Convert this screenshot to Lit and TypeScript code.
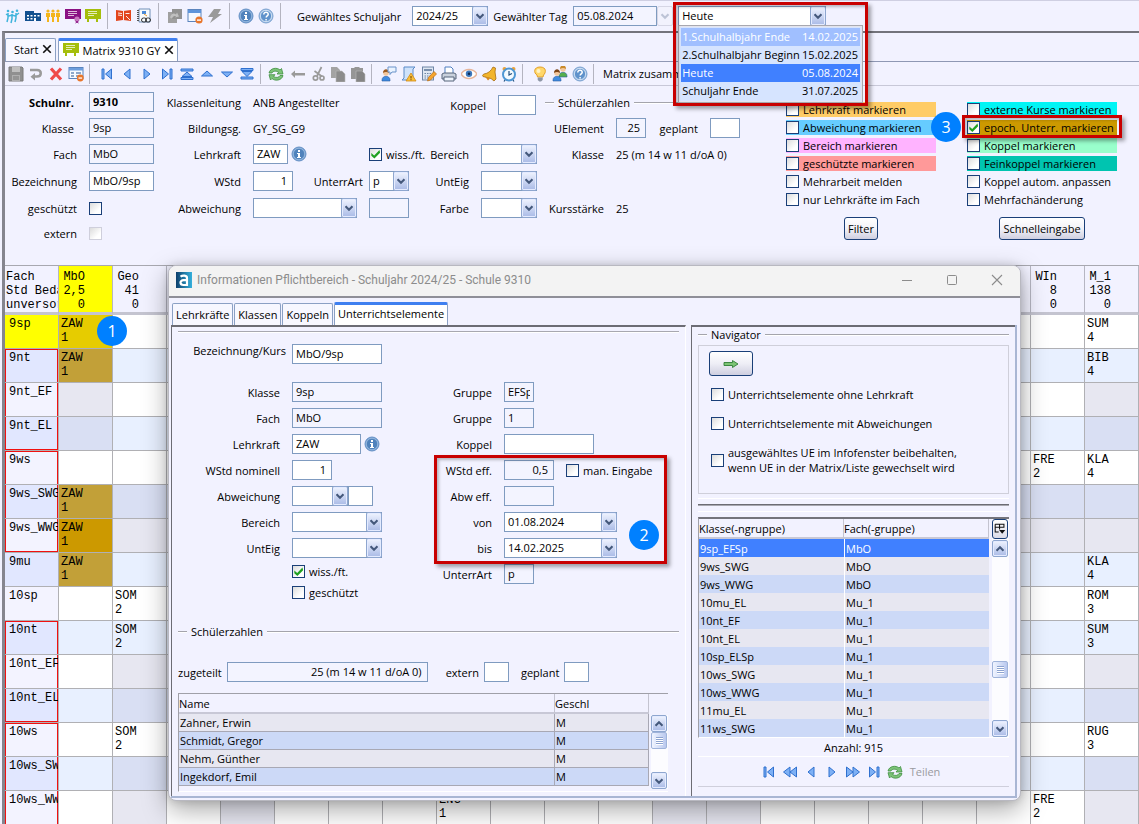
import { LitElement, html, svg, css, nothing, TemplateResult } from "lit";
import { customElement } from "lit/decorators.js";
import { classMap } from "lit/directives/class-map.js";

const G = "#9a9a9a";
const info = svg`<circle cx="8" cy="8" r="7" fill="#7fa8d6" stroke="#5a88bf" stroke-width=".9"/><circle cx="8" cy="8" r="5.700" fill="#4f82bc" stroke="#a4c2e4" stroke-width=".7"/><path d="M7 4h2v2H7zM6 7h3v4h1v1H6v-1h1V8H6z" fill="#fff"/>`;
const help = svg`<circle cx="8" cy="8" r="7" fill="#a9c5e6" stroke="#6f9acb" stroke-width=".9"/><circle cx="8" cy="8" r="5.600" fill="#5f92cb" stroke="#dce9f7" stroke-width=".8"/><path d="M5.8 6.400c0-3 4.600-2.800 4.400 0-.1 1.400-2 1.500-2 3M8.100 11v1.400" fill="none" stroke="#fff" stroke-width="1.500"/>`;
const person = (x: number, y: number, hair: string, body: string) => svg`<path d="M${x - 4} ${y + 8}c0-5 8-5 8 0v1h-8z" fill="${body}" stroke="#2a5ca0" stroke-width=".6"/><circle cx="${x}" cy="${y + 1}" r="2.800" fill="#f3c79c"/><path d="M${x - 3} ${y + 1}c0-5 6-5 6 0-2-1.500-4-1.500-6 0z" fill="${hair}"/>`;
const formWin = svg`<rect x="1" y="1.500" width="13" height="12" fill="#f5f9ff" stroke="#5b84bd"/><path d="M1 2h13v3H1z" fill="#5f95da"/><circle cx="12" cy="12" r="3.600" fill="#e8762c"/><path d="M10 11.400h4v1.400h-4z" fill="#fff"/>`;
const board = (c: string) => svg`<path d="M0 1h16v10H0z" fill="${c}"/><path d="M3 3.500h9M3 5.500h9M3 7.500h6" stroke="#fff" stroke-width=".9" opacity=".8"/>`;
const left = "M12 2v12L5 8z";
const right = "M5 2v12l7-6z";
const blue = (d: string) => svg`<path d="${d}" fill="#7db0f5" stroke="#2f70cf" stroke-width="1"/>`;

const ICONS: Record<string, unknown> = {
  pupils: svg`<g fill="none" stroke="#3fb4dc" stroke-width="1.500"><path d="M3 5v5l-1 4M7 6v5l-1 4M11 5v5l-1 4M1 6l3 2 3-1 3 1 4-3"/></g><g fill="#3fb4dc"><circle cx="3" cy="3" r="1.300"/><circle cx="7.500" cy="4" r="1.300"/><circle cx="12" cy="2.800" r="1.300"/></g>`,
  school: svg`<path d="M0 3h9v2h7v8H0z" fill="#12508f"/><path d="M2 7h2v1.500H2zM5.500 7h2v1.500h-2zM9 7h2v1.500H9zM12.500 7h2v1.500h-2zM2 10h2v1.500H2zM5.500 10h2v1.500h-2zM9 10h2v3H9z" fill="#fff"/>`,
  people: svg`<g fill="#f3b51b"><circle cx="3" cy="3" r="1.600"/><circle cx="8" cy="3" r="1.600"/><circle cx="13" cy="3" r="1.600"/><path d="M1 5h4v4H4v5H2V9H1zM6 5h4v4H9v5H7V9H6zM11 5h4v4h-1v5h-2V9h-1z"/></g>`,
  purple: svg`${board("#8a1083")}<circle cx="12" cy="11" r="2.600" fill="#c67abf"/><path d="M10.500 13l3 2M13.500 13l-3 2" stroke="#8a1083"/>`,
  green: svg`${board("#a5be0b")}<path d="M2 11h2v3H2zM11 11h2v3h-2z" fill="#a5be0b"/>`,
  book: svg`<path d="M0 2l7 1 8-1v11l-8-1-7 1z" fill="#e2451c"/><path d="M7.500 3v9M2 5l4 .5M2 7l4 .5M9.500 5.500h4M10 8l4 4" stroke="#fff" stroke-width=".9"/>`,
  note: svg`<path d="M3 1h11v13H3z" fill="#f8fafc" stroke="#7090b8"/><path d="M2 2v12" stroke="#555" stroke-width="2" stroke-dasharray="1 1"/><path d="M6 3h4v3H6z" fill="#4a8ad8"/><path d="M8 6l3 2" stroke="#e39a2d"/><rect x="5.500" y="10" width="5" height="4" rx="2" fill="none" stroke="#333"/><rect x="9.500" y="10" width="5" height="4" rx="2" fill="none" stroke="#333"/>`,
  layers: svg`<path d="M1 4h9v11H1z" fill="#a0a0a0"/><path d="M5 1h10v10H5z" fill="#929292"/><path d="M3 9.500c1-4 4-5 6-3l1-2 2 4-4 1 1-1c-2-1-3 0-4 2z" fill="#c0c0c0"/>`,
  form: formWin,
  bolt: svg`<path d="M7 1h7l-3 5h4L3 15l3-6H1z" fill="${G}"/>`,
  info,
  help,
  save: svg`<path d="M1 1h13l1 1v13H1z" fill="#909090" stroke="#7a7a7a"/><path d="M4 1h8v5H4z" fill="#c0c0c0"/><path d="M4 9h8v6H4z" fill="#b0b0b0"/><path d="M5 11h6M5 13h6" stroke="#7a7a7a"/>`,
  undo: svg`<path d="M2 4h7c5 0 5 6.500 0 6.500H6" fill="none" stroke="${G}" stroke-width="2.500"/><path d="M7 7v7.500L2.500 10.700z" fill="${G}"/>`,
  cross: svg`<path d="M3 2.500l10 11M13 2.500l-10 11" stroke="#ef4a4a" stroke-width="3.200"/>`,
  list: svg`<rect x="1" y="1.500" width="14" height="11" fill="#f6faff" stroke="#5b84bd"/><path d="M1 2h14v2.500H1z" fill="#6d9edd"/><path d="M3 7h3M3 10h3M8 7h5M8 10h3" stroke="#6c8cb8" stroke-width="1.300"/><circle cx="12.300" cy="12" r="3.400" fill="#e8762c"/><path d="M10.500 11.400h3.600v1.300h-3.600z" fill="#fff"/>`,
  first: blue("M3 3h2v10H3zM12.500 3v10L6.500 8z"),
  prev: blue("M11 3v10L5 8z"),
  next: blue("M5 3v10l6-5z"),
  last: blue("M11 3h2v10h-2zM3.500 3v10l6-5z"),
  rewind: blue("M8 3v10L1.500 8zM14.500 3v10L8 8z"),
  forward: blue("M1.500 3v10L8 8zM8 3v10l6.500-5z"),
  top: blue("M2 3h12v2H2zM8 6l5 4.500H3zM2 11.500h12v2H2z"),
  up: blue("M8 5l5.500 5h-11z"),
  down: blue("M8 11L2.500 6h11z"),
  bottom: blue("M2 2.500h12v2H2zM3 5.500h10l-5 5zM2 11h12v2H2z"),
  refresh: svg`<g fill="#7cc278" stroke="#3f8f40" stroke-width=".8"><path d="M1 7c1-5 8-6 11-3l1.500-1.500L15 8H9l1.600-1.700C8 4.500 5 5 4 7z"/><path d="M15 9.500c-1 5-8 6-11 3L2.500 14 1 8.700h6l-1.600 1.700c2.600 1.700 5.600 1.300 6.600-.9z"/></g>`,
  arrowLeft: svg`<path d="M1 8l4-3.500V7h10v2.500H5V12z" fill="${G}"/>`,
  cut: svg`<g fill="none" stroke="${G}" stroke-width="1.700"><path d="M11.500 1L7 10M4.500 5L12 10.500"/><circle cx="5.500" cy="12" r="2.200"/><circle cx="12" cy="12" r="2"/></g>`,
  copy: svg`<path d="M1 1h6l3 3v8H1z" fill="#a3a3a3"/><path d="M6 5h6l3 3v8H6z" fill="#8c8c8c" stroke="#bbb" stroke-width=".6"/>`,
  paste: svg`<path d="M1 2h3l1-1h4l1 1h3v11H1z" fill="#969696"/><path d="M6 5h6l3 3v8H6z" fill="#858585" stroke="#bbb" stroke-width=".6"/>`,
  talk: svg`${person(5, 6, "#9c5b1f", "#3f8be0")}<path d="M7 1h8v5h-4l-2 2.500V6H7z" fill="#eaf3ff" stroke="#6a93c9"/>`,
  warnDoc: svg`<path d="M3 1h11l-2 2v11H1l2-2z" fill="#cfe2fa" stroke="#5b8bc8"/><path d="M10 7l5 8H5z" fill="#f9bf3b" stroke="#d28a12" stroke-width=".8"/><path d="M10 10v2.500M10 13.200v1" stroke="#6b3f00"/>`,
  calc: svg`<rect x="1.500" y="1" width="11" height="13" fill="#dfe7f2" stroke="#6f86a6"/><path d="M3 3h8v2H3z" fill="#7b90ad"/><path d="M3.500 7.500h8M3.500 10h8M3.500 12h4" stroke="#6f86a6" stroke-dasharray="1.500 1"/><path d="M6.500 15l1-3.500 5.500-6 2.500 2.500-6 6z" fill="#f6a52c" stroke="#b96a10" stroke-width=".7"/>`,
  print: svg`<path d="M4 1h6l2 2v5H4z" fill="#fff" stroke="#4f7fc0"/><path d="M1 8l2-1h10l2 1v5H1z" fill="#c9d1dc" stroke="#57657a"/><path d="M3 11h10v4H3z" fill="#eef4fc" stroke="#57657a"/>`,
  eye: svg`<path d="M0 8c4-6 12-6 16 0-4 6-12 6-16 0z" fill="#fff" stroke="#e6b59b" stroke-width="1.400"/><circle cx="8" cy="7.800" r="3.200" fill="#3d78bd"/><circle cx="8" cy="7.800" r="1.300" fill="#102a50"/>`,
  horn: svg`<path d="M12 1l2.500 1-.5 4 1 7-2 2-3-2.500-8-2c-1-1 0-2 1-2.500 4-.5 7-3 9-7z" fill="#f2b52c" stroke="#a86d10" stroke-width=".8"/><path d="M4 10.500l3 4 2-2" fill="#d98b1d"/>`,
  clock: svg`<circle cx="3.500" cy="3" r="2" fill="#e9a23b"/><circle cx="12.500" cy="3" r="2" fill="#e9a23b"/><circle cx="8" cy="8.500" r="6" fill="#f4faff" stroke="#4f97d4" stroke-width="2"/><path d="M8 5v4l3-1.500M4 14l-1 1.500M12 14l1 1.500" fill="none" stroke="#24517f" stroke-width="1.200"/>`,
  bulb: svg`<path d="M8 1c7 0 6 6 3.500 8L11 11H5.500L5 9C1.500 7 1.500 1 8 1z" fill="#ffd76a" stroke="#e3a029"/><path d="M5.700 11.500h5V14L9 15.500H7.300L5.700 14z" fill="#8d96a5"/><circle cx="6.500" cy="5" r="2" fill="#fff3c4"/>`,
  users: svg`${person(11, 2, "#c98a2b", "#55ae4c")}${person(5, 6, "#7d4518", "#3f8be0")}`,
  go: svg`<path d="M1 6.500h8.500V4.500L15 8l-5.500 3.500V9.500H1z" fill="#7cc474" stroke="#2f7f36" stroke-width=".9"/>`,
  close: svg`<path d="M3 3l10 10M13 3L3 13" stroke="#111" stroke-width="2.200"/>`,
  chevron: svg`<path d="M4 6l4 4 4-4" fill="none" stroke="#45597c" stroke-width="2.400"/>`,
  chevronUp: svg`<path d="M4 10l4-4 4 4" fill="none" stroke="#45597c" stroke-width="2.400"/>`,
  columns: svg`<path d="M2.500 2.500h10v4M7.500 2.500v6M2.500 6h10M2.500 2.500v9h4" fill="none" stroke="#111" stroke-width="1.200"/><path d="M7 9h7l-3.500 4.500z" fill="#111"/>`,
  min: svg`<path d="M3 8.500h10" stroke="#8c8c8c"/>`,
  max: svg`<rect x="3.500" y="3.500" width="9" height="9" rx="1" fill="none" stroke="#8c8c8c"/>`,
  shut: svg`<path d="M3 3l10 10M13 3L3 13" stroke="#8c8c8c" stroke-width="1.100"/>`,
  logo: svg`<defs><linearGradient id="lg"><stop offset="0" stop-color="#0d3f6b"/><stop offset="1" stop-color="#35b0dc"/></linearGradient></defs><path d="M0 0h16v16H0z" fill="url(#lg)"/><path d="M4.500 4.600c2-1.500 6.500-1.500 6.500 1.400v7H7.500C3.500 13 3.500 8.200 7.500 8.200H11" fill="none" stroke="#fff" stroke-width="2.200"/>`,
};

const icon = (name: string) => html`<svg class="icon" viewBox="0 0 16 16" aria-hidden="true">${ICONS[name]}</svg>`;
const tools = (names: string[], cls = "") => html`<div class="tools ${cls}">${names.map((n) => html`<button class="tool" aria-label=${n}>${icon(n)}</button>`)}</div>`;
const sep = () => html`<span class="sep"></span>`;

const label = (id: string, text: string, cls = "") => html`<label class="lab ${cls}" for=${id}>${text}</label>`;
const box = (id: string, w: string, value = "", cls = "") =>
  html`<input class="box ${w} ${cls}" id=${id} .value=${value} ?readonly=${cls.includes("ro")} />`;
const combo = (id: string, w: string, value = "", name = "") => html`<span class="combo ${w}"
  ><select id=${id} aria-label=${name || nothing}><option>${value}</option></select><span class="arrow">${icon("chevron")}</span></span>`;
const check = (id: string, text: string | TemplateResult, opts: { on?: boolean; tone?: string } = {}) =>
  html`<label class="check ${opts.tone ?? ""}" for=${id}><input type="checkbox" id=${id} ?checked=${opts.on ?? false} /><span>${text}</span></label>`;

type Note = Record<number, [string, string]>;
/* w open, l open (even row), g closed, b closed (even row), s selected, k epochal, m epochal marked */
const ROWS: { name: string; cells: string; group?: string; notes: Note }[] = [
  { name: "9sp", cells: "swwwwwwwwwwwwwwwwwww", group: "cur", notes: { 0: ["ZAW", "1"], 19: ["SUM", "4"] } },
  { name: "9nt", cells: "klllllllllllllllllll", group: "in start", notes: { 0: ["ZAW", "1"], 19: ["BIB", "4"] } },
  { name: "9nt_EF", cells: "gwwwwwwwwwwwwwwwwwwg", group: "in", notes: {} },
  { name: "9nt_EL", cells: "bllllllllllllllllllb", group: "in end", notes: {} },
  { name: "9ws", cells: "wwwwwwwwwwwwwwwwwwww", group: "in start", notes: { 18: ["FRE", "2"], 19: ["KLA", "4"] } },
  { name: "9ws_SWG", cells: "kbbbbbbbbbbbbbbbbbbb", group: "in", notes: { 0: ["ZAW", "1"] } },
  { name: "9ws_WWG", cells: "mggggggggggggggggggg", group: "in end", notes: { 0: ["ZAW", "1"] } },
  { name: "9mu", cells: "klllllllllllllllllll", notes: { 0: ["ZAW", "1"], 19: ["KLA", "4"] } },
  { name: "10sp", cells: "wwwwwwwwwwwwwwwwwwww", notes: { 1: ["SOM", "2"], 19: ["ROM", "3"] } },
  { name: "10nt", cells: "llllllllllllllllllll", group: "in start", notes: { 1: ["SOM", "2"], 19: ["SUM", "3"] } },
  { name: "10nt_EF", cells: "wggwwwwwwwwwwwwwwwwg", group: "in", notes: {} },
  { name: "10nt_EL", cells: "lbbllllllllllllllllb", group: "in end", notes: {} },
  { name: "10ws", cells: "wwwwwwwwwwwwwwwwwwww", group: "in start", notes: { 1: ["SOM", "2"], 19: ["RUG", "3"] } },
  { name: "10ws_SW", cells: "lbbllllllllllllllllb", group: "in", notes: {} },
  { name: "10ws_WW", cells: "wgwgwwwwwwwggwwwwwwg", group: "in", notes: { 7: ["ENG", "1"], 18: ["FRE", "2"] } },
];
const HEADS: Record<number, string[]> = {
  0: ["MbO", "2,5", "0"],
  1: ["Geo", "41", "0"],
  18: ["WIn", "8", "0"],
  19: ["M_1", "138", "0"],
};
const GROUPS = [
  ["9sp_EFSp", "MbO"], ["9ws_SWG", "MbO"], ["9ws_WWG", "MbO"], ["10mu_EL", "Mu_1"], ["10nt_EF", "Mu_1"], ["10nt_EL", "Mu_1"],
  ["10sp_ELSp", "Mu_1"], ["10ws_SWG", "Mu_1"], ["10ws_WWG", "Mu_1"], ["11mu_EL", "Mu_1"], ["11ws_SWG", "Mu_1"],
];
const PUPILS = ["Zahner, Erwin", "Schmidt, Gregor", "Nehm, Günther", "Ingekdorf, Emil"];
const DAYS = [
  ["1.Schulhalbjahr Ende", "14.02.2025", "dim"],
  ["2.Schulhalbjahr Beginn", "15.02.2025", ""],
  ["Heute", "05.08.2024", "sel"],
  ["Schuljahr Ende", "31.07.2025", ""],
];

@customElement("app-root")
export class AppRoot extends LitElement {
  static styles = css`
    :host { display: block; position: relative; min-height: 100vh; overflow: hidden; background: #f2f2ff; color: #000; font: 11px/15px "Open Sans", "Noto Sans", sans-serif; }
    * { box-sizing: border-box; }
    button, input, select { font: inherit; color: inherit; margin: 0; }
    .icon { width: 16px; height: 16px; display: block; flex: none; }
    .row { display: flex; align-items: center; }

    .bar { display: flex; align-items: center; height: 31px; padding-left: 3px; border-top: 1px solid #cfcfe2; white-space: nowrap; }
    .tools { display: flex; }
    .tool { width: 20px; height: 20px; padding: 2px; border: 0; background: none; }
    .sep { width: 1px; height: 26px; margin: 0 6px 0 4px; background: #b4b4c0; flex: none; }
    .bar .lab { margin-left: 10px; margin-right: 11px; padding: 0; }
    .bar .lab.day { margin-left: 5px; margin-right: 6px; }
    .pick { position: relative; margin-left: 5px; }
    .off { width: 16px; height: 20px; padding: 0; border: 1px solid #c4c4d4; border-radius: 2px; background: #f2f2fc; opacity: .6; display: grid; place-items: center; }
    .off .icon { width: 14px; opacity: .5; }
    .menu { position: absolute; z-index: 5; left: 0; top: 19px; width: 185px; margin: 0; padding: 2px; list-style: none; background: #d6e4ff; border: 1px solid #a8a8b0; box-shadow: inset 0 0 0 1px #e4e4ec; }
    .menu li { display: flex; justify-content: space-between; height: 18px; padding: 1px 2px 0 1px; }
    .menu .dim { background: #a0bfff; color: #fff; }
    .menu .sel { background: #4080ff; color: #fff; }
    .mark { position: absolute; z-index: 6; border: 3px solid #c80000; box-shadow: 3px 3px 4px rgba(0,0,0,.35), inset 2px 2px 3px rgba(0,0,0,.25); pointer-events: none; }
    .pick .mark { left: -5px; top: -4px; width: 195px; height: 104px; }
    .dot { position: absolute; z-index: 7; width: 30px; height: 30px; border-radius: 50%; background: #0080ff; color: #fff; font: 16px/30px "Open Sans", sans-serif; text-align: center; }

    .work { margin-left: 2px; border-left: 3px solid #85858f; border-top: 2px solid #74747c; }
    .tabs { display: flex; align-items: flex-end; gap: 2px; height: 28px; }
    .tab { display: flex; align-items: center; height: 23px; padding: 0 2px 2px 8px; gap: 3px; border: 1px solid #8ba0c4; border-bottom: 0; border-radius: 2px 2px 0 0; background: #f7f7ff; white-space: nowrap; }
    .tab.on { border-top: 3px solid #3f7ff0; padding-left: 4px; background: #fff; }
    .tab .icon { width: 12px; height: 12px; }
    .tab .wide { width: 16px; height: 16px; display: flex; }
    .tab .wide .icon { width: 16px; height: 16px; }
    .bar2 { display: flex; align-items: center; height: 25px; padding-left: 1px; border-top: 1px solid #8f98b4; border-bottom: 1px solid #c8c8d8; white-space: nowrap; }
    .bar2 .sep { height: 20px; margin: 0 5px 0 3px; }
    .in2 { padding-left: 2px; }
    .bar2 .text { padding-left: 4px; }

    .form { display: flex; align-items: flex-start; padding-top: 3px; height: 179px; }
    .main { display: grid; grid-template-columns: 84px 65px 99px 116px 112px 64px; grid-template-rows: 26px 26px 26px 28px 26px 25px; align-items: center; flex: none; }
    .lab { text-align: right; padding-right: 12px; white-space: nowrap; }
    .lab.near { padding-right: 15px; }
    .lab.tight { padding-right: 6px; }
    .push { margin-left: auto; }
    .strong { font-weight: 700; }
    .c1 { grid-column: 1; } .c2 { grid-column: 2; } .c3 { grid-column: 3; } .c5 { grid-column: 5; }
    .koppel { grid-column: 5 / 7; justify-content: flex-end; padding-right: 9px; align-self: end; }
    .box { height: 20px; padding: 0 3px 1px; border: 1px solid #7f9bc0; border-radius: 0; background: #fff; outline: 0; min-width: 0; }
    .box.ro { background: #f3f4ff; }
    .box.num { text-align: right; padding-right: 5px; }
    .w25 { width: 25px; } .w30 { width: 30px; } .w35 { width: 35px; } .w38 { width: 38px; } .w40 { width: 40px; } .w50 { width: 50px; } .w56 { width: 56px; } .w65 { width: 65px; } .w69 { width: 69px; } .w76 { width: 76px; } .w84 { width: 84px; } .w90 { width: 90px; } .w104 { width: 104px; } .w113 { width: 113px; } .w148 { width: 148px; } .w201 { width: 201px; }
    .info { margin-left: 3px; width: 16px; }
    .combo { display: inline-grid; grid-template-columns: minmax(0, 1fr) 16px; height: 20px; flex: none; }
    .combo select { grid-area: 1 / 1 / 2 / 3; appearance: none; border: 1px solid #7f9bc0; border-radius: 0; background: #fff; padding: 0 17px 1px 3px; width: 100%; outline: 0; }
    .arrow, .sb { border: 1px solid #8ea6cf; border-radius: 2px; background: linear-gradient(#f0f4ff, #a9bae6); box-shadow: inset 0 0 0 1px #e4ebff; }
    .arrow { grid-area: 1 / 2; pointer-events: none; display: grid; place-items: center; overflow: hidden; }
    .arrow .icon { width: 14px; }
    .check { display: flex; align-items: center; gap: 4px; white-space: nowrap; }
    .check input { appearance: none; width: 13px; height: 13px; margin: 0; border: 1px solid #1a3f78; background: linear-gradient(135deg, #dcdcdc, #fff 70%); flex: none; }
    .check input:checked::before { content: ""; display: block; width: 11px; height: 11px; background: #21a121; clip-path: polygon(12% 40%, 38% 64%, 86% 14%, 92% 38%, 40% 92%, 12% 66%); }
    .check.pale input { border-color: #cfcfdc; }
    .pupils { width: 220px; margin-right: 21px; flex: none; display: grid; grid-template-columns: 71px 30px 64px 30px; grid-template-rows: 26px 26px 26px 28px 26px; align-items: center; }
    .rule { display: flex; align-items: center; gap: 4px; white-space: nowrap; grid-column: 1 / -1; margin: 0; font-size: 11px; font-weight: 400; }
    .rule::before, .rule::after { content: ""; height: 1px; background: #a4a4ac; box-shadow: 0 1px #fff; }
    .rule::before { width: 9px; }
    .rule::after { flex: 1; }
    .pupils .rule { width: 220px; }
    .span { grid-column: 2 / -1; white-space: nowrap; }
    .marks { display: grid; grid-template-columns: 150px 150px; column-gap: 31px; row-gap: 3px; padding-top: 13px; position: relative; flex: none; }
    .marks .check { height: 15px; }
    .orange { background: #ffcc66; } .sky { background: #66ccff; } .pink { background: #ffb3ff; } .salmon { background: #ff9999; }
    .cyan { background: #00f5f5; } .ochre { background: #cc9900; } .mint { background: #99ffcc; } .teal { background: #00c4b0; }
    .btn { justify-self: center; height: 23px; padding: 0 3px; margin-top: 7px; border: 1px solid #1a3f78; border-radius: 3px; background: linear-gradient(#fff, #f2f2f8 50%, #cfcfe0); }
    .marks .mark { left: 176px; top: 26px; width: 160px; height: 23px; }
    .dot.three { left: 145px; top: 23px; }

    .matrix { position: relative; overflow: hidden; border-top: 1px solid #a8a8b0; }
    .grid { border-collapse: separate; border-spacing: 0; table-layout: fixed; width: 1134px; font: 12px/14px "Liberation Mono", "Courier New", monospace; }
    .grid th, .grid td { padding: 0; text-align: left; vertical-align: top; font-weight: 400; overflow: hidden; white-space: pre; }
    .grid thead th { height: 48px; padding: 4px 27px 0 0; text-align: right; border-bottom: 3px solid #c4c4d0; border-right: 1px solid #b6b6c2; }
    .grid thead th:first-child { text-align: left; padding: 4px 0 0 1px; }
    .grid thead .hot { background: #ff0; }
    .grid tbody th, .grid td { height: 34px; border-right: 1px solid #b0b0b4; border-bottom: 1px solid #b0b0b4; padding: 2px 0 0 2px; }
    .grid tbody th { padding: 2px 0 0 4px; background: #f3f3ff; }
    .grid tbody tr:nth-child(even) th { background: #e1e7ff; }
    .grid tbody tr th.cur { background: #ff0; }
    .grid th.in { box-shadow: inset 1px 0 #f01010, inset -1px 0 #f01010; }
    .grid th.start { box-shadow: inset 1px 0 #f01010, inset -1px 0 #f01010, inset 0 1px #f01010; }
    .grid th.end { box-shadow: inset 1px 0 #f01010, inset -1px 0 #f01010, inset 0 -1px #f01010; }
    .w { background: #fff; } .l { background: #e8f0ff; } .g { background: #e7e7f1; } .b { background: #d9dff3; } .s { background: #e6cc00; } .k { background: #c2a038; } .m { background: #cc9900; }
    .dot.one { left: 92px; top: 50px; }

    .win { position: absolute; z-index: 3; left: 168px; top: 265px; width: 853px; background: #f2f2ff; border: 1px solid #b8b8c0; border-radius: 8px; box-shadow: 0 9px 26px rgba(0,0,0,.34), 0 0 8px rgba(0,0,0,.15); overflow: hidden; }
    .title { display: flex; align-items: center; height: 32px; padding: 0 15px 2px 7px; gap: 5px; background: #f3f3f3; border-bottom: 2px solid #8f8f98; color: #8c8c8c; font: 12px/16px Roboto, "Open Sans", sans-serif; white-space: nowrap; }
    .caps { margin-left: auto; display: flex; gap: 29px; }
    .caps button { border: 0; padding: 0; background: none; }
    .body { padding: 4px 3px 2px 2px; }
    .body .tabs { height: 23px; gap: 1px; padding-left: 1px; }
    .body .tab { height: 22px; padding: 0 3px; }
    .body .tab.on { height: 23px; padding-bottom: 3px; }
    .panes { display: grid; grid-template-columns: 515px minmax(0, 1fr); gap: 5px; border-right: 2px solid #a9b6d4; border-bottom: 2px solid #a9b6d4; }
    .pane { border: solid #6c6c74; border-width: 2px 0 0 1px; height: 471px; }
    .pane.a { border-right: 1px solid #fff; padding: 4px 6px 0; }
    .pane.b2 { padding: 0 6px; }
    .line { height: 2px; background: #a8a8b0; border-bottom: 1px solid #fff; }
    .lead { display: flex; align-items: flex-end; height: 31px; }
    .lead .lab { width: 114px; padding-right: 6px; align-self: flex-start; padding-top: 10px; }
    .fields { display: grid; grid-template-columns: 114px 90px 122px minmax(0, 1fr); grid-template-rows: repeat(8, 26px) 21px; align-items: center; margin-top: 15px; position: relative; }
    .fields .mark { left: 256px; top: 76px; width: 233px; height: 109px; }
    .dot.two { left: 451px; top: 141px; }
    .ticks { grid-column: 2; grid-row: 8 / 10; align-self: start; display: grid; gap: 6px; padding-top: 3px; }
    .gap { padding-left: 12px; }
    .second { margin-top: 16px; }
    .sums { display: flex; align-items: center; height: 20px; margin-top: 23px; }
    .sums .lab { padding-right: 5px; } .sums .mid { padding-left: 18px; } .sums .mid2 { padding-left: 12px; }
    .list { display: flex; align-items: flex-start; border-top: 1px solid #a0a0a8; border-left: 1px solid #a0a0a8; border-bottom: 1px solid #fff; }
    .list table { flex: 1; border-collapse: separate; border-spacing: 0; table-layout: fixed; width: 100%; }
    .list th { text-align: left; font-weight: 400; padding: 0 2px 0 0; border-right: 1px solid #c4c4d0; border-bottom: 2px solid #c8c8d6; height: 20px; }
    .list td { height: 18px; padding: 0 0 0 1px; white-space: nowrap; line-height: 15px; }
    .list tbody tr { background: #e7e7f1; }
    .list tbody tr.even { background: #ccd9f7; }
    .names { margin: 11px 11px 0 0; height: 99px; overflow: hidden; }
    .names .wide { width: 376px; }
    .names td { border-bottom: 1px solid #a8a8b4; border-right: 1px solid #a8a8b4; }
    .scroll { width: 17px; flex: none; display: flex; flex-direction: column; margin-left: 2px; background: #fcfcff; }
    .sb { height: 17px; width: 16px; padding: 0; display: grid; place-items: center; flex: none; overflow: hidden; }
    .sb .icon { width: 14px; }
    .thumb { height: 17px; width: 16px; border: 1px solid #9fb3da; border-radius: 2px; background: linear-gradient(90deg, #f0f4ff, #b9c8ee); flex: none; display: grid; place-items: center; }
    .thumb::before { content: ""; width: 7px; height: 8px; background: repeating-linear-gradient(#8da3d0 0 1px, #fff 1px 2px); }
    .names .scroll { margin-top: 21px; height: 74px; }
    .fill { flex: 2; }
    .fill.more { flex: 5; }
    .nav { border: 1px solid #cfcfda; height: 149px; margin-top: 3px; padding: 5px 10px; }
    .nav .check { margin-left: 2px; }
    .go { display: grid; place-items: center; width: 44px; height: 25px; padding: 0; border: 1px solid #1a3f78; border-radius: 3px; background: linear-gradient(#fff, #eeeef6 50%, #cfcfe0); }
    .n1 { margin-top: 11px; } .n2 { margin-top: 14px; } .n3 { margin-top: 14px; }
    .bars { height: 14px; margin: 4px 0 5px; border: solid #fff; border-width: 1px 0; padding-top: 5px; }
    .bars::before { content: ""; display: block; height: 1px; background: #6c6c74; box-shadow: 0 1px #a8a8b0; }
    .groups { border-top: 2px solid #74747c; }
    .groups td + td { border-left: 1px solid #fff; }
    .groups tbody tr.sel { background: #4080ff; color: #fff; }
    .groups .scroll { margin-left: 3px; height: 218px; }
    .groups .pickcol { height: 20px; width: 16px; padding: 0; border: 1px solid #1a3f78; border-radius: 3px; background: linear-gradient(#fff, #dcdce8); margin-bottom: 1px; flex: none; display: grid; place-items: center; overflow: hidden; }
    .pickcol .icon { width: 14px; }
    .count { text-align: center; height: 19px; line-height: 19px; border-bottom: 1px solid #fff; }
    .pager { display: flex; justify-content: center; align-items: center; height: 30px; border-bottom: 1px solid #cfcfdc; gap: 1px; color: #9a9aa0; padding-right: 8px; }
    .pager .text { padding-left: 4px; }
  `;

  private topForm() {
    return html`<form class="form">
      <div class="main">
        ${label("snr", "Schulnr.", "c1 near strong")}${box("snr", "w65", "9310", "ro strong")}
        <span class="lab c3">Klassenleitung</span><span>ANB Angestellter</span>
        <div class="row koppel">${label("kop", "Koppel")}${box("kop", "w38")}</div>
        ${label("kl", "Klasse", "c1 near")}${box("kl", "w65", "9sp", "ro")}
        <span class="lab c3">Bildungsg.</span><span>GY_SG_G9</span>
        ${label("fa", "Fach", "c1")}${box("fa", "w65", "MbO", "ro")}
        ${label("lk", "Lehrkraft", "c3")}
        <div class="row">${box("lk", "w35", "ZAW")}<span class="info">${icon("info")}</span></div>
        <div class="row c5">${check("wf", "wiss./ft.", { on: true })}${label("be", "Bereich", "push")}</div>
        ${combo("be", "w56")}
        ${label("bz", "Bezeichnung", "c1")}${box("bz", "w65", "MbO/9sp")}
        ${label("ws", "WStd", "c3")}
        <div class="row">${box("ws", "w40", "1", "num")}${label("ua", "UnterrArt", "push tight")}</div>
        <div class="row">${combo("ua", "w40", "p")}${label("ue", "UntEig", "push")}</div>
        ${combo("ue", "w56")}
        ${label("gs", "geschützt", "c1")}<span class="check c2"><input type="checkbox" id="gs" /></span>
        ${label("ab", "Abweichung", "c3")}${combo("ab", "w104")}
        <div class="row"><input class="box w40 ro" aria-label="Abweichung Wert" readonly />${label("fb", "Farbe", "push")}</div>
        ${combo("fb", "w56")}
        ${label("ex", "extern", "c1")}<span class="check pale c2"><input type="checkbox" id="ex" disabled /></span>
      </div>
      <div class="pupils">
        <h2 class="rule">Schülerzahlen</h2>
        ${label("uel", "UElement")}${box("uel", "w30", "25", "num ro")}${label("gp", "geplant")}${box("gp", "w30")}
        <span class="lab c1">Klasse</span><span class="span">25 (m 14 w 11 d/oA 0)</span>
        <span class="span"></span>
        <span class="lab c1">Kursstärke</span><span class="span">25</span>
      </div>
      <div class="marks">
        ${check("m1", "Lehrkraft markieren", { tone: "orange" })}${check("m2", "externe Kurse markieren", { tone: "cyan" })}
        ${check("m3", "Abweichung markieren", { tone: "sky" })}${check("m4", "epoch. Unterr. markieren", { tone: "ochre", on: true })}
        ${check("m5", "Bereich markieren", { tone: "pink" })}${check("m6", "Koppel markieren", { tone: "mint" })}
        ${check("m7", "geschützte markieren", { tone: "salmon" })}${check("m8", "Feinkoppel markieren", { tone: "teal" })}
        ${check("m9", "Mehrarbeit melden")}${check("m10", "Koppel autom. anpassen")}
        ${check("m11", "nur Lehrkräfte im Fach")}${check("m12", "Mehrfachänderung")}
        <button type="button" class="btn">Filter</button><button type="button" class="btn">Schnelleingabe</button>
        <span class="mark"></span><span class="dot three">3</span>
      </div>
    </form>`;
  }

  private matrix() {
    const cols = Array.from({ length: 20 }, (_, i) => i);
    return html`<div class="matrix">
      <table class="grid">
        <thead><tr><th>Fach<br />Std Bedarf<br />unversorgt</th>${cols.map(
          (i) => html`<th class=${i === 0 ? "hot" : ""}>${(HEADS[i] ?? []).map((t) => html`${t}<br />`)}</th>`
        )}</tr></thead>
        <tbody>${ROWS.map(
          (r) => html`<tr><th class=${r.group ?? ""}>${r.name}</th>${cols.map(
            (i) => html`<td class=${r.cells[i]}>${r.notes[i] ? html`${r.notes[i][0]}<br />${r.notes[i][1]}` : nothing}</td>`
          )}</tr>`
        )}</tbody>
      </table>
      <span class="dot one">1</span>
    </div>`;
  }

  private details() {
    return html`<div class="pane a">
      <div class="line"></div>
      <div class="lead">${label("dbz", "Bezeichnung/Kurs")}${box("dbz", "w90", "MbO/9sp")}</div>
      <div class="fields">
        ${label("d1", "Klasse", "c1")}${box("d1", "w90", "9sp", "ro")}${label("e1", "Gruppe", "c3")}${box("e1", "w30", "EFSp", "ro")}
        ${label("d2", "Fach", "c1")}${box("d2", "w90", "MbO", "ro")}${label("e2", "Gruppe", "c3")}${box("e2", "w30", "1", "ro")}
        ${label("d3", "Lehrkraft", "c1")}<div class="row">${box("d3", "w69", "ZAW")}<span class="info">${icon("info")}</span></div>
        ${label("e3", "Koppel", "c3")}${box("e3", "w90")}
        ${label("d4", "WStd nominell", "c1")}${box("d4", "w40", "1", "num")}
        ${label("e4", "WStd eff.", "c3")}<div class="row">${box("e4", "w50", "0,5", "num ro")}<span class="gap">${check("me", "man. Eingabe")}</span></div>
        ${label("d5", "Abweichung", "c1")}<div class="row">${combo("d5", "w56")}<input class="box w25" aria-label="Abweichung Wert" /></div>
        ${label("e5", "Abw eff.", "c3")}${box("e5", "w50", "", "ro")}
        ${label("d6", "Bereich", "c1")}${combo("d6", "w90")}${label("e6", "von", "c3")}${combo("e6", "w113", "01.08.2024")}
        ${label("d7", "UntEig", "c1")}${combo("d7", "w90")}${label("e7", "bis", "c3")}${combo("e7", "w113", "14.02.2025")}
        <div class="ticks">${check("dw", "wiss./ft.", { on: true })}${check("dg", "geschützt")}</div>
        ${label("e8", "UnterrArt", "c3")}${box("e8", "w30", "p", "ro")}
        <span class="mark"></span><span class="dot two">2</span>
      </div>
      <h2 class="rule second">Schülerzahlen</h2>
      <div class="sums">
        ${label("zg", "zugeteilt")}${box("zg", "w201", "25 (m 14 w 11 d/oA 0)", "num ro")}
        ${label("se", "extern", "mid")}${box("se", "w25")}${label("sg", "geplant", "mid2")}${box("sg", "w25")}
      </div>
      <div class="list names">
        <table>
          <thead><tr><th class="wide">Name</th><th>Geschl</th></tr></thead>
          <tbody>${PUPILS.map((p, i) => html`<tr class=${classMap({ even: i % 2 === 1 })}><td>${p}</td><td>M</td></tr>`)}</tbody>
        </table>
        <div class="scroll"><button class="sb" aria-label="hoch">${icon("chevronUp")}</button><span class="thumb"></span><span class="fill"></span><button class="sb" aria-label="runter">${icon("chevron")}</button></div>
      </div>
    </div>`;
  }

  private navigator() {
    return html`<div class="pane b2">
      <h2 class="rule">Navigator</h2>
      <div class="nav">
        <button class="go" aria-label="Weiter">${icon("go")}</button>
        <div class="n1">${check("n1", "Unterrichtselemente ohne Lehrkraft")}</div>
        <div class="n2">${check("n2", "Unterrichtselemente mit Abweichungen")}</div>
        <div class="n3">${check("n3", html`ausgewähltes UE im Infofenster beibehalten,<br />wenn UE in der Matrix/Liste gewechselt wird`)}</div>
      </div>
      <div class="bars"></div>
      <div class="list groups">
        <table>
          <thead><tr><th>Klasse(-ngruppe)</th><th>Fach(-gruppe)</th></tr></thead>
          <tbody>${GROUPS.map(
            ([k, f], i) => html`<tr class=${classMap({ sel: i === 0, even: i > 0 && i % 2 === 0 })}><td>${k}</td><td>${f}</td></tr>`
          )}</tbody>
        </table>
        <div class="scroll">
          <button class="pickcol" aria-label="Spalten">${icon("columns")}</button>
          <button class="sb" aria-label="hoch">${icon("chevronUp")}</button><span class="fill more"></span><span class="thumb"></span><span class="fill"></span><button class="sb" aria-label="runter">${icon("chevron")}</button>
        </div>
      </div>
      <div class="count">Anzahl: 915</div>
      <div class="pager">${["first", "rewind", "prev", "next", "forward", "last", "refresh"].map(
        (n) => html`<button class="tool" aria-label=${n}>${icon(n)}</button>`
      )}<span class="text">Teilen</span></div>
    </div>`;
  }

  render() {
    return html`
      <div class="bar">
        ${tools(["pupils", "school", "people", "purple", "green"])}${sep()}${tools(["book", "note"])}${sep()}${tools(["layers", "form", "bolt"])}${sep()}${tools(["info", "help"])}${sep()}
        ${label("year", "Gewähltes Schuljahr")}${combo("year", "w76", "2024/25")}
        ${label("day", "Gewählter Tag", "day")}${box("day", "w84", "05.08.2024", "ro")}<button class="off" disabled aria-label="Kalender">${icon("chevron")}</button>
        <div class="pick row">
          ${combo("pick", "w148", "Heute", "Stichtag")}
          <ul class="menu" role="listbox">${DAYS.map(([n, d, c]) => html`<li role="option" class=${c}><span>${n}</span><span>${d}</span></li>`)}</ul>
          <span class="mark"></span>
        </div>
      </div>
      <div class="work">
        <div class="tabs">
          <button class="tab">Start ${icon("close")}</button>
          <button class="tab on"><span class="wide">${icon("green")}</span>Matrix 9310 GY ${icon("close")}</button>
        </div>
        <div class="bar2">
          ${tools(["save", "undo", "cross", "list"])}${sep()}${tools(["first", "prev", "next", "last", "top", "up", "down", "bottom"], "in2")}${sep()}
          ${tools(["refresh"])}${tools(["arrowLeft", "cut", "copy", "paste"], "in2")}${sep()}
          ${tools(["talk", "warnDoc", "calc", "print", "eye", "horn", "clock"], "in2")}${sep()}${tools(["bulb", "users", "help"], "in2")}${sep()}
          <span class="text">Matrix zusamm</span>
        </div>
        ${this.topForm()}
        ${this.matrix()}
      </div>
      <section class="win" role="dialog" aria-label="Informationen Pflichtbereich">
        <div class="title">${icon("logo")}<span>Informationen Pflichtbereich - Schuljahr 2024/25 - Schule 9310</span>
          <span class="caps"><button aria-label="Minimieren">${icon("min")}</button><button aria-label="Maximieren">${icon("max")}</button><button aria-label="Schließen">${icon("shut")}</button></span>
        </div>
        <div class="body">
          <div class="tabs"><button class="tab">Lehrkräfte</button><button class="tab">Klassen</button><button class="tab">Koppeln</button><button class="tab on">Unterrichtselemente</button></div>
          <div class="panes">${this.details()}${this.navigator()}</div>
        </div>
      </section>`;
  }
}
